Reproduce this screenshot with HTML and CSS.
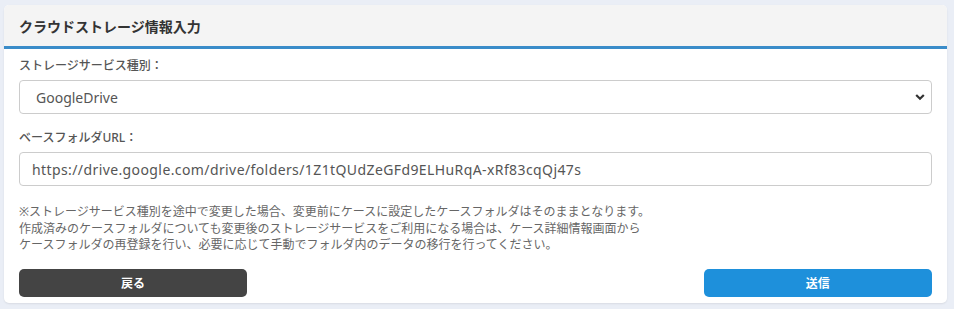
FILE: index.html
```html
<!DOCTYPE html>
<html lang="ja">
<head>
<meta charset="utf-8">
<title>クラウドストレージ情報入力</title>
<link rel="stylesheet" href="styles.css">
</head>
<body>
<div class="page">
  <div class="card">
    <div class="card-header">クラウドストレージ情報入力</div>
    <div class="card-body">
      <div class="field field-select">
        <label class="label">ストレージサービス種別：</label>
        <div class="select-wrap">
          <select class="control select">
            <option>GoogleDrive</option>
          </select>
          <svg class="chevron" width="10" height="8" viewBox="0 0 10 8"><path d="M1.2 2 L5 5.8 L8.8 2" fill="none" stroke="#333" stroke-width="2.2"/></svg>
        </div>
      </div>
      <div class="field">
        <label class="label">ベースフォルダURL：</label>
        <input class="control url" type="text" value="https://drive.google.com/drive/folders/1Z1tQUdZeGFd9ELHuRqA-xRf83cqQj47s">
      </div>
      <p class="note">※ストレージサービス種別を途中で変更した場合、変更前にケースに設定したケースフォルダはそのままとなります。<br>作成済みのケースフォルダについても変更後のストレージサービスをご利用になる場合は、ケース詳細情報画面から<br>ケースフォルダの再登録を行い、必要に応じて手動でフォルダ内のデータの移行を行ってください。</p>
      <div class="actions">
        <button class="btn btn-back">戻る</button>
        <button class="btn btn-send">送信</button>
      </div>
    </div>
  </div>
</div>
</body>
</html>
```

FILE: styles.css
```css
* { box-sizing: border-box; }
html, body {
  margin: 0;
  padding: 0;
  background: #eaeef6;
  font-family: "Noto Sans", "Noto Sans CJK JP", sans-serif;
  color: #333;
}
.page {
  padding: 5px 7px 6px 4px;
}
.card {
  background: #fff;
  border-radius: 5px;
  box-shadow: 0 1px 2px rgba(0, 0, 0, 0.08);
  overflow: hidden;
}
.card-header {
  height: 44px;
  background: #f4f4f4;
  border-bottom: 3px solid #3a8cc9;
  padding: 0 15px 0 15px;
  display: flex;
  align-items: center;
  font-size: 14px;
  font-weight: bold;
  color: #333;
}
.card-body {
  padding: 8px 15px 6px;
}
.field {
  display: flex;
  flex-direction: column;
  gap: 5px;
}
.field-select {
  margin-bottom: 15px;
}
.label {
  font-size: 12px;
  line-height: 18px;
  color: #555;
  font-weight: 500;
}
.control {
  width: 100%;
  height: 34px;
  border: 1px solid #ccc;
  border-radius: 4px;
  background: #fff;
  font-family: inherit;
  font-size: 14px;
  color: #555;
  padding: 0 12px;
  outline: none;
}
.url {
  letter-spacing: 0.4px;
}
.select-wrap {
  position: relative;
}
.select {
  appearance: none;
  -webkit-appearance: none;
  padding-left: 16px;
}
.chevron {
  position: absolute;
  right: 7px;
  top: 13px;
}
.note {
  margin: 18px 0 0;
  font-size: 12px;
  line-height: 16.5px;
  color: #666;
}
.actions {
  display: flex;
  justify-content: space-between;
  margin-top: 15px;
}
.btn {
  width: 25%;
  height: 28px;
  border: none;
  border-radius: 5px;
  font-family: inherit;
  font-size: 12px;
  font-weight: bold;
  color: #fff;
}
.btn-back { background: #444; }
.btn-send { background: #1e90db; }
```
